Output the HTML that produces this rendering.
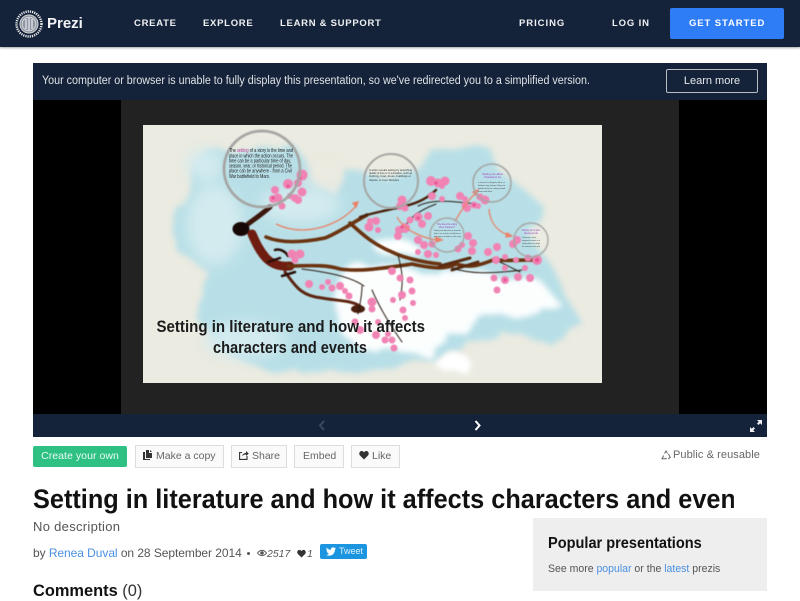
<!DOCTYPE html>
<html><head><meta charset="utf-8"><title>Setting in literature - Prezi</title>
<style>
*{box-sizing:border-box}
html,body{margin:0;padding:0;width:800px;height:600px;overflow:hidden;background:#fff;font-family:"Liberation Sans",sans-serif;color:#444}
.a{position:absolute;white-space:nowrap}
header{position:absolute;left:0;top:0;width:800px;height:47px;background:#15233a;box-shadow:0 1px 2px rgba(0,0,0,.35)}
.nav{font-weight:700;font-size:9.5px;letter-spacing:.72px;color:#eef0f3;top:17.500px;line-height:12px}
.btn{position:absolute;top:445px;height:23px;background:#fafafa;border:1px solid #ddd;font-size:10.5px;line-height:21px;color:#666;white-space:nowrap;padding-left:8px}
a{color:#4a90e2;text-decoration:none}
svg{display:block}
</style></head><body>
<header>
<svg class="a" style="left:15px;top:10px" width="28" height="28" viewBox="0 0 28 28">
<circle cx="14" cy="14" r="12.500" fill="none" stroke="#eee" stroke-width="2.400" stroke-dasharray="1.200 1"/>
<circle cx="14" cy="14" r="9.600" fill="#8d95a1"/>
<circle cx="14" cy="14" r="9" fill="none" stroke="#ddd" stroke-width=".8"/>
<circle cx="14" cy="14" r="6.800" fill="none" stroke="#dfe1e4" stroke-width=".8"/>
<path d="M11 9v10M14 8v12M17 9v10" stroke="#fff" stroke-width="1"/>
</svg>
<div class="a" style="left:47px;top:14px;font-size:15px;line-height:20px;font-weight:700;color:#f2f3f5">Prezi</div>
<div class="a nav" style="left:134px">CREATE</div>
<div class="a nav" style="left:203px">EXPLORE</div>
<div class="a nav" style="left:280px">LEARN &amp; SUPPORT</div>
<div class="a nav" style="left:519px;letter-spacing:.95px">PRICING</div>
<div class="a nav" style="left:612px;letter-spacing:.85px">LOG IN</div>
<div class="a" style="left:670px;top:8px;width:114px;height:31px;background:#2f7df6;border-radius:2px"></div>
<div class="a nav" style="left:689px;color:#fff;letter-spacing:.9px">GET STARTED</div>
</header>

<div class="a" style="left:33px;top:63px;width:734px;height:374px;background:#15233a"></div>
<div class="a" style="left:42px;top:74px;font-size:11.500px;line-height:14px;color:#dfe2e6;transform-origin:0 0;transform:scaleX(.932)">Your computer or browser is unable to fully display this presentation, so we've redirected you to a simplified version.</div>
<div class="a" style="left:666px;top:69px;width:92px;height:24px;border:1px solid #b9bec6;border-radius:2px;color:#e6e8eb;font-size:11px;line-height:22px;text-align:center">Learn more</div>
<div class="a" style="left:33px;top:100px;width:734px;height:314px;background:#000"></div>
<div class="a" style="left:121px;top:100px;width:558px;height:314px;background:#222"></div>

<svg class="a" style="left:143px;top:125px" width="459" height="258" viewBox="143 125 459 258">
<defs>
<filter id="cl" x="-10%" y="-10%" width="120%" height="120%" color-interpolation-filters="sRGB"><feTurbulence type="fractalNoise" baseFrequency=".035" numOctaves="3" seed="4"/><feDisplacementMap in="SourceGraphic" scale="16"/><feGaussianBlur stdDeviation="3"/></filter>
<filter id="b8" x="-50%" y="-50%" width="200%" height="200%" color-interpolation-filters="sRGB"><feGaussianBlur stdDeviation="7"/></filter>
<filter id="b4" x="-30%" y="-30%" width="160%" height="160%" color-interpolation-filters="sRGB"><feGaussianBlur stdDeviation="3.500"/></filter>
<filter id="b1" x="-20%" y="-20%" width="140%" height="140%" color-interpolation-filters="sRGB"><feGaussianBlur stdDeviation=".6"/></filter>
<filter id="b0" x="-5%" y="-5%" width="110%" height="110%" color-interpolation-filters="sRGB"><feGaussianBlur stdDeviation=".4"/></filter>
</defs>
<rect x="143" y="125" width="459" height="258" fill="#ebebe1"/>
<g filter="url(#cl)" fill="#b8dfe7">
<path d="M172 228L185 200L192 160L215 145L232 152L262 150L295 146L305 160L318 185L335 195L345 170L385 178L420 172L430 150L455 150L490 148L498 170L525 190L545 208L528 232L552 268L565 296L584 325L550 344L500 330L462 350L420 362L360 372L270 372L226 350L196 318L208 272L176 250Z"/>
</g>
<g filter="url(#b8)" fill="#ebebe1">
<ellipse cx="322" cy="176" rx="15" ry="12"/>
</g>
<g filter="url(#b8)" fill="#d3ebef"><ellipse cx="205" cy="165" rx="18" ry="16"/><ellipse cx="215" cy="225" rx="28" ry="40"/><ellipse cx="300" cy="205" rx="40" ry="18"/><ellipse cx="245" cy="340" rx="40" ry="18"/></g>
<g filter="url(#cl)" fill="#fff">
<path d="M345 268L400 266L425 276L480 272L540 280L560 304L520 320L485 314L468 336L445 330L428 358L390 350L362 350L342 334L334 300Z" opacity=".95"/>
<ellipse cx="452" cy="362" rx="18" ry="9"/>
<ellipse cx="395" cy="246" rx="22" ry="8"/>
</g>
<g filter="url(#b0)" fill="none" stroke-linecap="round" stroke-linejoin="round">
<path d="M248 224C256 218 262 214 270 207" stroke="#3c170c" stroke-width="5"/>
<ellipse cx="241" cy="229" rx="8.500" ry="7" fill="#150806"/>
<path d="M252 234C256 243 259 250 266 258C272 264 280 267 290 266" stroke="#6f1d10" stroke-width="9"/>
<path d="M266 237C280 243 300 243 325 238C340 232 350 224 367 215" stroke="#6b3310" stroke-width="3.600"/>
<path d="M360 217C375 212 390 210 405 206C418 203 428 198 436 190" stroke="#4a200c" stroke-width="2.400"/>
<path d="M350 223C360 232 372 244 392 252C402 257 420 262 440 264" stroke="#6b3310" stroke-width="3.600"/>
<path d="M288 266C305 266 325 264 340 269C360 272 385 268 412 264C430 268 445 270 456 264C470 268 478 266 493 260C510 261 520 260 533 260" stroke="#6b3310" stroke-width="3.600"/>
<path d="M440 266L470 258M452 270L478 262" stroke="#5a2a10" stroke-width="3"/>
<path d="M285 272C295 285 300 296 322 298C338 301 350 300 360 306" stroke="#5d2310" stroke-width="3"/>
<ellipse cx="358" cy="309" rx="7" ry="4" fill="#4a200c"/>
<path d="M275 250C280 248 286 252 288 256M268 262L280 258M295 272L282 276" stroke="#2a0f08" stroke-width="2.500"/>
<path d="M302 269C325 272 350 276 364 286M362 286C362 296 360 304 358 314M372 290C378 304 388 322 402 342" stroke="#2a1a12" stroke-width="1"/>
<path d="M398 255C402 270 404 280 400 300M402 232C408 220 415 212 436 204M418 206C430 200 445 200 476 204" stroke="#2a1a12" stroke-width="1"/>
<path d="M452 268C470 274 490 274 522 270M500 262L520 272" stroke="#2a1a12" stroke-width="1"/>
</g>
<g filter="url(#b1)">
<g fill="#f083b3">
<circle cx="302" cy="175" r="5.500"/><circle cx="298" cy="183" r="4"/><circle cx="302" cy="192" r="4.500"/><circle cx="288" cy="184" r="5"/><circle cx="275" cy="190" r="4"/><circle cx="278" cy="198" r="4.500"/><circle cx="273" cy="199" r="4"/><circle cx="295" cy="198" r="4"/><circle cx="298" cy="200" r="4"/><circle cx="282" cy="206" r="3.500"/><circle cx="290" cy="196" r="3"/>
<circle cx="292" cy="254" r="4.500"/><circle cx="300" cy="254" r="4.500"/><circle cx="295" cy="260" r="3.500"/>
<circle cx="369" cy="227" r="4.500"/><circle cx="376" cy="221" r="4"/><circle cx="378" cy="230" r="3"/><circle cx="370" cy="221" r="3"/>
<circle cx="402" cy="200" r="4.500"/><circle cx="400" cy="206" r="4"/><circle cx="405" cy="208" r="3.500"/>
<circle cx="431" cy="181" r="5"/><circle cx="438" cy="183" r="4.500"/><circle cx="445" cy="181" r="4.500"/><circle cx="432" cy="196" r="4"/>
<circle cx="442" cy="199" r="3"/><circle cx="442" cy="186" r="3"/><circle cx="460" cy="196" r="4"/><circle cx="465" cy="199" r="3"/>
<circle cx="465" cy="205" r="3.500"/><circle cx="467" cy="208" r="4"/><circle cx="474" cy="205" r="3.500"/><circle cx="485" cy="200" r="4.500"/><circle cx="478" cy="206" r="3"/><circle cx="480" cy="197" r="3.500"/>
<circle cx="410" cy="220" r="3.500"/><circle cx="418" cy="217" r="4.500"/><circle cx="422" cy="224" r="4"/><circle cx="428" cy="216" r="4"/><circle cx="405" cy="228" r="5"/><circle cx="398" cy="236" r="4"/><circle cx="399" cy="230" r="4"/>
<circle cx="418" cy="240" r="4"/><circle cx="424" cy="245" r="4"/><circle cx="432" cy="244" r="3.500"/><circle cx="428" cy="254" r="4"/><circle cx="418" cy="252" r="3"/><circle cx="436" cy="255" r="3"/>
<circle cx="468" cy="236" r="4"/><circle cx="473" cy="243" r="4"/><circle cx="472" cy="251" r="4"/><circle cx="462" cy="245" r="3"/><circle cx="458" cy="249" r="3.500"/><circle cx="488" cy="252" r="4"/><circle cx="497" cy="247" r="4"/><circle cx="505" cy="257" r="3"/>
<circle cx="513" cy="244" r="4"/><circle cx="517" cy="240" r="4"/>
<circle cx="537" cy="260" r="5"/><circle cx="528" cy="258" r="3.500"/><circle cx="496" cy="260" r="4"/><circle cx="516" cy="260" r="3"/>
<circle cx="494" cy="278" r="3.500"/><circle cx="505" cy="280" r="4"/><circle cx="518" cy="277" r="4"/><circle cx="530" cy="278" r="4"/><circle cx="497" cy="290" r="3.500"/><circle cx="505" cy="268" r="3"/><circle cx="525" cy="268" r="3"/>
<circle cx="392" cy="271" r="4"/><circle cx="400" cy="278" r="3.500"/><circle cx="410" cy="280" r="3.500"/><circle cx="402" cy="295" r="4"/><circle cx="412" cy="291" r="3.500"/><circle cx="413" cy="303" r="3"/><circle cx="393" cy="300" r="3"/><circle cx="403" cy="310" r="3.500"/><circle cx="405" cy="318" r="3"/>
<circle cx="309" cy="284" r="4"/><circle cx="322" cy="287" r="3"/><circle cx="332" cy="288" r="3.500"/><circle cx="340" cy="286" r="4"/><circle cx="328" cy="282" r="3"/><circle cx="345" cy="291" r="3"/><circle cx="349" cy="296" r="3.500"/>
<circle cx="372" cy="302" r="4.500"/><circle cx="372" cy="309" r="3.500"/><circle cx="355" cy="322" r="3.500"/><circle cx="360" cy="330" r="4"/><circle cx="376" cy="335" r="4"/><circle cx="385" cy="340" r="3.500"/><circle cx="392" cy="340" r="3.500"/><circle cx="394" cy="348" r="3.500"/><circle cx="388" cy="334" r="3"/><circle cx="378" cy="322" r="3"/>
</g>
<g fill="#e54f95"><circle cx="300" cy="178" r="1.500"/><circle cx="288" cy="186" r="1.500"/><circle cx="273" cy="198" r="1.500"/><circle cx="402" cy="227" r="1.500"/><circle cx="436" cy="183" r="1.500"/><circle cx="474" cy="205" r="1.500"/><circle cx="537" cy="260" r="2"/><circle cx="505" cy="280" r="1.500"/><circle cx="418" cy="218" r="1.500"/></g>
</g>
<g fill="none" stroke="#ea8066" stroke-width="1.300" filter="url(#b0)">
<path d="M276 224C305 238 340 225 356 206"/><path d="M358 202l-5 1l3 4z" fill="#ea8066"/>
<path d="M397 217C405 232 425 238 436 240"/><path d="M442 240l-6-3v5z" fill="#ea8066"/>
<path d="M455 221C462 210 465 203 477 192"/><path d="M478 190l-5 2l3 3z" fill="#ea8066"/>
<path d="M489 209C490 225 500 232 508 235"/><path d="M512 236l-5-3l-1 4z" fill="#ea8066"/>
</g>
<g fill="none" stroke="#a5a5a3" filter="url(#b0)">
<circle cx="262" cy="169" r="38" stroke-width="2.800"/>
<circle cx="391" cy="181" r="27" stroke-width="2"/>
<circle cx="492" cy="183" r="19" stroke-width="1.600"/>
<circle cx="447" cy="235" r="17" stroke-width="1.400"/>
<circle cx="531" cy="240" r="17" stroke-width="1.400"/>
</g>
<g font-family="'Liberation Sans',sans-serif" font-size="5" fill="#222">
<text x="229" y="152" textLength="64" lengthAdjust="spacingAndGlyphs">The <tspan fill="#c2409a">setting</tspan> of a story is the time and</text>
<text x="229" y="157.500" textLength="64" lengthAdjust="spacingAndGlyphs">place in which the action occurs. The</text>
<text x="229" y="162.500" textLength="62" lengthAdjust="spacingAndGlyphs">time can be a particular time of day,</text>
<text x="229" y="167.500" textLength="63" lengthAdjust="spacingAndGlyphs">season, year, or historical period. The</text>
<text x="229" y="172.500" textLength="63" lengthAdjust="spacingAndGlyphs">place can be anywhere - from a Civil</text>
<text x="229" y="178" textLength="41" lengthAdjust="spacingAndGlyphs">War battlefield to Mars.</text>
</g>
<g font-family="'Liberation Sans',sans-serif" font-size="2.800" fill="#333">
<text x="369" y="171" textLength="43" lengthAdjust="spacingAndGlyphs">A writer reveals setting by describing</text>
<text x="369" y="174" textLength="43" lengthAdjust="spacingAndGlyphs">details of time or in a location, such as</text>
<text x="369" y="177" textLength="42" lengthAdjust="spacingAndGlyphs">clothing, food, dress, buildings or</text>
<text x="369" y="181" textLength="30" lengthAdjust="spacingAndGlyphs">objects, or even lifestyles</text>
<g font-size="2.500" fill="#a03fc0"><text x="482" y="175" textLength="21" lengthAdjust="spacingAndGlyphs">Setting can affect</text><text x="484" y="178" textLength="17" lengthAdjust="spacingAndGlyphs">characters by</text>
<text x="437" y="225" textLength="20" lengthAdjust="spacingAndGlyphs">How does the setting</text><text x="439" y="228" textLength="16" lengthAdjust="spacingAndGlyphs">affect characters?</text>
<text x="522" y="231" textLength="18" lengthAdjust="spacingAndGlyphs">Setting can impact</text><text x="524" y="234" textLength="14" lengthAdjust="spacingAndGlyphs">plot/events</text></g>
<g font-size="2.200" fill="#444"><text x="478" y="183" textLength="27" lengthAdjust="spacingAndGlyphs">a character's thoughts, ideas, or</text><text x="478" y="186" textLength="27" lengthAdjust="spacingAndGlyphs">feelings may change if they are</text><text x="478" y="189" textLength="27" lengthAdjust="spacingAndGlyphs">influenced by the setting around</text><text x="478" y="192" textLength="14" lengthAdjust="spacingAndGlyphs">them and what</text>
<text x="434" y="231" textLength="27" lengthAdjust="spacingAndGlyphs">Setting can affect how a character</text><text x="434" y="234" textLength="27" lengthAdjust="spacingAndGlyphs">thinks, acts or feels, and believes in</text><text x="434" y="237" textLength="27" lengthAdjust="spacingAndGlyphs">one way or another in the story</text>
<text x="522" y="238" textLength="14" lengthAdjust="spacingAndGlyphs">Characters must</text><text x="522" y="241" textLength="18" lengthAdjust="spacingAndGlyphs">respond to events in a</text><text x="522" y="244" textLength="18" lengthAdjust="spacingAndGlyphs">setting that can shape</text><text x="522" y="247" textLength="18" lengthAdjust="spacingAndGlyphs">the outcome of the plot</text></g>
</g>
<g font-family="'Liberation Sans',sans-serif" font-size="17" font-weight="700" fill="#1c1c1c">
<text x="156.500" y="332" textLength="268.500" lengthAdjust="spacingAndGlyphs">Setting in literature and how it affects</text>
<text x="213" y="353" textLength="154" lengthAdjust="spacingAndGlyphs">characters and events</text>
</g>
</svg>

<svg class="a" style="left:316px;top:419px" width="12" height="13" viewBox="0 0 12 13"><path d="M8 2L4 6.500L8 11" fill="none" stroke="#3c4a5e" stroke-width="2"/></svg>
<svg class="a" style="left:472px;top:419px" width="12" height="13" viewBox="0 0 12 13"><path d="M3.500 2L7.500 6.500L3.500 11" fill="none" stroke="#fff" stroke-width="2"/></svg>
<svg class="a" style="left:749px;top:419px" width="14" height="14" viewBox="0 0 14 14" fill="#eef0f2"><path d="M8 1h5v5l-1.800-1.800L9.500 6 8 4.500 9.800 2.800zM6 13H1V8l1.800 1.800L4.500 8 6 9.500 4.200 11.200z"/></svg>

<div class="a" style="left:33px;top:446px;width:94px;height:21px;background:#2fc184;border-radius:2px;color:#e8fbf3;font-size:10.500px;line-height:21px;text-align:center;letter-spacing:.05px">Create your own</div>
<div class="btn" style="left:135px;width:89px;padding-left:7px"><svg style="display:inline-block;vertical-align:-1px;margin-right:3px" width="10" height="10" viewBox="0 0 10 10" fill="#333"><path d="M3 0h3v3h3v5H3zM7 0l2 2H7zM0 2h2v7h5v1H0z"/></svg>Make a copy</div>
<div class="btn" style="left:231px;width:56px;padding-left:7px"><svg style="display:inline-block;vertical-align:-1px;margin-right:3px" width="10" height="10" viewBox="0 0 10 10" fill="none" stroke="#333" stroke-width="1.100"><path d="M8 6v3.400H.6V2.500H3"/><path d="M3 6.500C3.500 4 5 3 7 3V1l2.800 2.600L7 6V4.500C5 4.500 4 5 3 6.500z" fill="#333" stroke="none"/></svg>Share</div>
<div class="btn" style="left:294px;width:50px">Embed</div>
<div class="btn" style="left:351px;width:49px;padding-left:7px"><svg style="display:inline-block;vertical-align:-1px;margin-right:3px" width="10" height="10" viewBox="0 0 10 10" fill="#333"><path d="M5 9.500L1 5.500C-.5 3.800.5 1 2.700 1 3.800 1 4.500 1.600 5 2.400 5.500 1.600 6.200 1 7.300 1 9.500 1 10.500 3.800 9 5.500z"/></svg>Like</div>

<svg class="a" style="left:661px;top:450px" width="10" height="10" viewBox="0 0 10 10" fill="none" stroke="#666" stroke-width="1"><path d="M3.500 3.500L5 1l1.500 2.500M7.500 4L9.300 7.500 7 8.800M5.800 8.800H1L2.700 5.500"/></svg>
<div class="a" style="left:673px;top:448px;font-size:11px;line-height:14px;color:#666;letter-spacing:.08px">Public &amp; reusable</div>

<div class="a" style="left:33px;top:482px;width:748px;overflow:hidden;font-size:27px;line-height:34px;font-weight:700;color:#111;transform-origin:0 0;transform:scaleX(.937)">Setting in literature and how it affects characters and events</div>
<div class="a" style="left:33px;top:519px;font-size:13px;line-height:16px;color:#555;letter-spacing:.3px">No description</div>
<div class="a" style="left:33px;top:546px;font-size:12px;line-height:15px;color:#555;letter-spacing:-.06px">by <a>Renea Duval</a> on 28 September 2014</div>
<div class="a" style="left:247px;top:552px;width:3px;height:3px;border-radius:50%;background:#555"></div>
<svg class="a" style="left:257px;top:549px" width="10" height="8" viewBox="0 0 10 8"><path d="M.5 4C3 .5 7 .5 9.500 4 7 7.500 3 7.500.5 4z" fill="none" stroke="#555"/><circle cx="5" cy="4" r="1.800" fill="#555"/></svg>
<div class="a" style="left:267px;top:547px;font-size:10.500px;line-height:14px;font-style:italic;color:#555">2517</div>
<svg class="a" style="left:297px;top:549px" width="9" height="9" viewBox="0 0 10 10" fill="#333"><path d="M5 9.500L1 5.500C-.5 3.800.5 1 2.700 1 3.800 1 4.500 1.600 5 2.400 5.500 1.600 6.200 1 7.300 1 9.500 1 10.500 3.800 9 5.500z"/></svg>
<div class="a" style="left:307px;top:547px;font-size:10.500px;line-height:14px;font-style:italic;color:#555">1</div>
<div class="a" style="left:320px;top:544px;width:47px;height:15px;background:#1b95e0;border-radius:2px;color:#dff1fb;font-size:9px;line-height:15px;padding-left:19px">Tweet</div>
<svg class="a" style="left:326px;top:547px" width="10" height="9" viewBox="0 0 24 20" fill="#fff"><path d="M24 2.400c-.9.400-1.800.700-2.800.800 1-.6 1.800-1.600 2.200-2.700-1 .6-2 1-3.100 1.200C19.300.6 18 0 16.600 0c-2.700 0-4.900 2.200-4.900 4.900 0 .4 0 .8.100 1.100C7.700 5.800 4.100 3.900 1.700.9 1.200 1.600 1 2.500 1 3.400c0 1.700.9 3.200 2.200 4.100-.8 0-1.600-.2-2.200-.6v.1c0 2.400 1.700 4.400 3.900 4.800-.7.200-1.500.2-2.200.1.600 2 2.400 3.400 4.600 3.400C5.600 17.400 2.900 18.300 0 18c2.200 1.400 4.800 2 7.500 2 9.100 0 14-7.500 14-14v-.6c1-.7 1.800-1.600 2.500-3z"/></svg>
<div class="a" style="left:33px;top:581px;font-size:16.400px;line-height:20px;font-weight:700;color:#111">Comments <span style="font-weight:400;color:#333">(0)</span></div>

<div class="a" style="left:533px;top:518px;width:234px;height:73px;background:#eee"></div>
<div class="a" style="left:548px;top:534px;font-size:16px;line-height:20px;font-weight:700;color:#111;transform-origin:0 0;transform:scaleX(.91)">Popular presentations</div>
<div class="a" style="left:548px;top:562px;font-size:11px;line-height:14px;color:#555;transform-origin:0 0;transform:scaleX(.955)">See more <a>popular</a> or the <a>latest</a> prezis</div>
</body></html>
